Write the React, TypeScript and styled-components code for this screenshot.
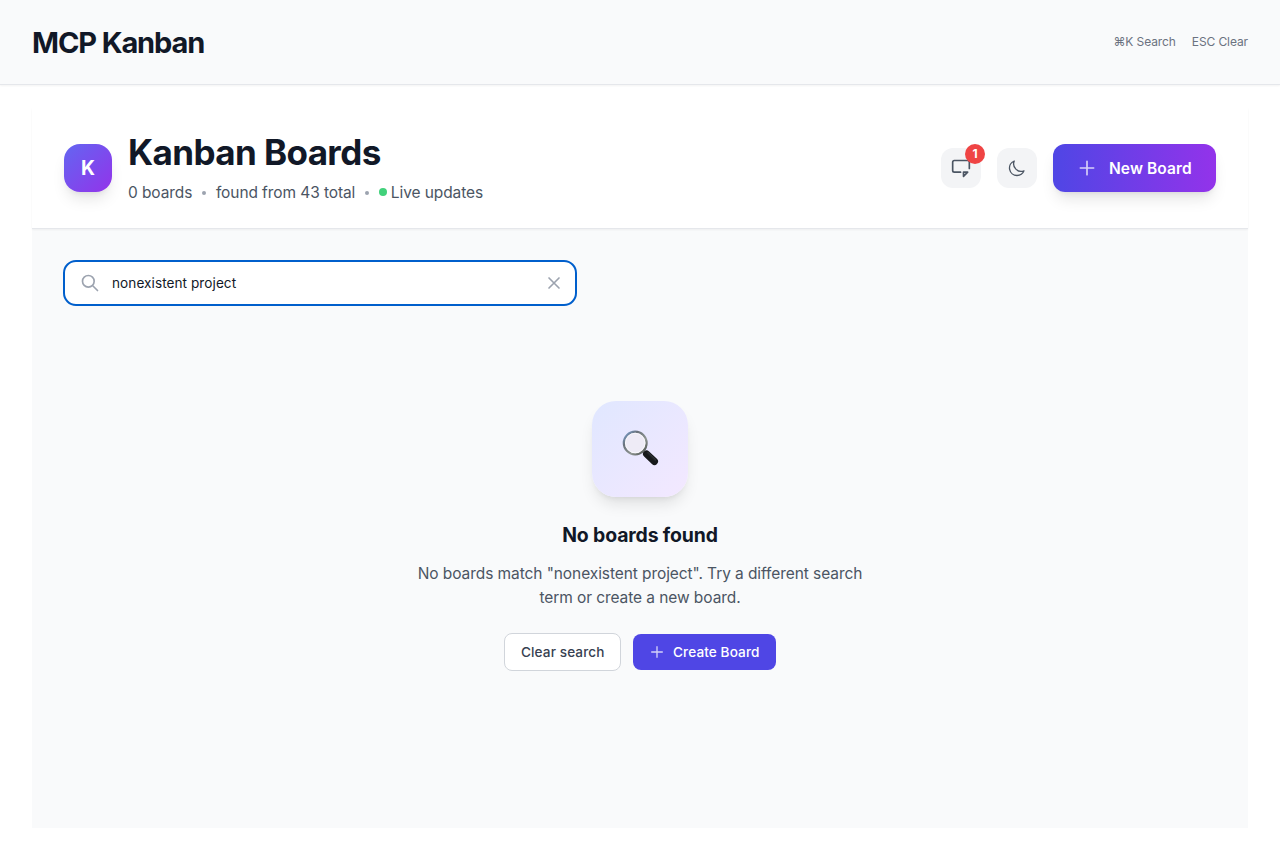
import React, { useState } from "react";
import styled, { createGlobalStyle, css } from "styled-components";

const GlobalStyle = createGlobalStyle`
  *, *::before, *::after { box-sizing: border-box; }
  body {
    margin: 0;
    background: #fff;
    color: #111827;
    font-family: Inter, "Liberation Sans", sans-serif;
    font-size: 15.5px;
    line-height: 24px;
  }
  h1, h2, h3, p { margin: 0; }
  button, input { font: inherit; }
`;

const Page = styled.div`
  min-height: 852px;
`;

const TopBar = styled.header`
  display: flex;
  align-items: center;
  justify-content: space-between;
  height: 85px;
  padding: 0 32px;
  background: #f9fafb;
  border-bottom: 1px solid #e5e7eb;
  box-shadow: 0 1px 2px rgba(0, 0, 0, 0.05);
`;

const AppName = styled.h1`
  padding-top: 2px;
  font-size: 29px;
  line-height: 36px;
  font-weight: 700;
  letter-spacing: -1.12px;
`;

const Hints = styled.div`
  display: flex;
  gap: 16px;
  font-size: 12px;
  line-height: 16px;
  letter-spacing: -0.1px;
  color: #6b7280;
`;

const Panel = styled.main`
  margin: 23px 32px 24px;
  height: 720px;
  background: #f9fafb;
`;

const PanelHeader = styled.div`
  display: flex;
  align-items: center;
  justify-content: space-between;
  height: 121px;
  padding: 0 32px;
  background: #fff;
  border-bottom: 1px solid #e5e7eb;
  box-shadow: 0 1px 2px rgba(0, 0, 0, 0.05);
`;

const Brand = styled.div`
  display: flex;
  align-items: center;
  gap: 16px;
`;

const Logo = styled.div`
  display: grid;
  place-items: center;
  width: 48px;
  height: 48px;
  border-radius: 16px;
  background: linear-gradient(to bottom right, #6366f1, #9333ea);
  box-shadow: 0 10px 15px -3px rgba(0, 0, 0, 0.1), 0 4px 6px -4px rgba(0, 0, 0, 0.1);
  color: #fff;
  font-size: 19.4px;
  font-weight: 700;
`;

const Title = styled.h2`
  font-size: 35px;
  line-height: 40px;
  font-weight: 700;
  letter-spacing: -0.6px;
`;

const Meta = styled.div`
  display: flex;
  align-items: center;
  margin-top: 8px;
  color: #4b5563;
  letter-spacing: -0.09px;
  line-height: 22px;
  height: 24px;
  white-space: nowrap;
`;

const MetaText = styled.span`
  padding-top: 2px;
`;

const Separator = styled.span`
  width: 4px;
  height: 4px;
  margin: 2px 9.8px 0;
  border-radius: 50%;
  background: #9ca3af;
`;

const LiveDot = styled.span`
  width: 8px;
  height: 8px;
  margin-right: 4px;
  border-radius: 50%;
  background: #41d17b;
`;

const Actions = styled.div`
  display: flex;
  align-items: center;
  gap: 16px;
`;

const IconButton = styled.button`
  position: relative;
  display: grid;
  place-items: center;
  width: 40px;
  height: 40px;
  padding: 0;
  border: 0;
  border-radius: 12px;
  background: #f3f4f6;
  color: #4b5563;
`;

const Badge = styled.span`
  position: absolute;
  top: -4px;
  right: -4px;
  width: 20px;
  height: 20px;
  border-radius: 50%;
  background: #ef4444;
  color: #fff;
  font-size: 12px;
  line-height: 20px;
  font-weight: 700;
  text-align: center;
`;

const Button = styled.button<{ $kind: "hero" | "solid" | "outline" }>`
  display: flex;
  align-items: center;
  border: 0;
  color: #fff;
  white-space: nowrap;
  svg { flex: none; opacity: 0.75; }
  ${({ $kind }) =>
    $kind === "hero"
      ? css`
          gap: 12px;
          width: 163px;
          height: 48px;
          padding: 0 24px;
          border-radius: 12px;
          background: linear-gradient(to right, #4f46e5, #9333ea);
          box-shadow: 0 10px 15px -3px rgba(0, 0, 0, 0.1), 0 4px 6px -4px rgba(0, 0, 0, 0.1);
          font-weight: 600;
          letter-spacing: 0.1px;
          span { padding-top: 2px; }
        `
      : css`
          gap: 8px;
          height: 36px;
          padding: 0 16px;
          border-radius: 8px;
          background: #4f46e5;
          font-size: 13.6px;
          line-height: 20px;
          font-weight: 500;
          letter-spacing: 0.1px;
        `}
  ${({ $kind }) => $kind === "solid" && css`width: 143px;`}
  ${({ $kind }) =>
    $kind === "outline" &&
    css`
      width: 117px;
      height: 38px;
      border: 1px solid #d1d5db;
      background: #fff;
      color: #374151;
    `}
`;

const SearchBox = styled.label`
  display: flex;
  align-items: center;
  width: 514px;
  height: 46px;
  margin: 31px 0 0 31px;
  padding: 0 11px 0 15px;
  border: 2px solid #005fcc;
  border-radius: 13px;
  background: #fff;
  color: #9ca3af;
`;

const SearchInput = styled.input`
  flex: 1;
  min-width: 0;
  margin-left: 12px;
  padding: 0;
  border: 0;
  outline: 0;
  background: transparent;
  color: #111827;
  font-size: 13.6px;
  line-height: 20px;
  letter-spacing: 0.06px;
`;

const ClearButton = styled.button`
  display: flex;
  padding: 0;
  border: 0;
  background: none;
  color: #9ca3af;
`;

const EmptyState = styled.section`
  display: flex;
  flex-direction: column;
  align-items: center;
  padding-top: 95px;
  text-align: center;
`;

const EmptyTile = styled.div`
  display: grid;
  place-items: center;
  width: 96px;
  height: 96px;
  border-radius: 24px;
  background: linear-gradient(to bottom right, #e0e7ff, #f3e8ff);
  box-shadow: 0 10px 15px -3px rgba(0, 0, 0, 0.1), 0 4px 6px -4px rgba(0, 0, 0, 0.1);
`;

const EmptyTitle = styled.h3`
  margin-top: 24px;
  font-size: 19.4px;
  line-height: 28px;
  font-weight: 700;
  letter-spacing: -0.13px;
`;

const EmptyText = styled.p`
  width: 450px;
  margin-top: 13px;
  color: #4b5563;
  letter-spacing: -0.08px;
`;

const ButtonRow = styled.div`
  display: flex;
  align-items: center;
  gap: 12px;
  margin-top: 23px;
`;

function Icon({ d, size = 20, width = 1.5 }: { d: string; size?: number; width?: number }) {
  return (
    <svg width={size} height={size} viewBox="0 0 24 24" fill="none" stroke="currentColor" strokeWidth={width} strokeLinecap="round" strokeLinejoin="round">
      <path d={d} />
    </svg>
  );
}

const PLUS = "M12 4v16m8-8H4";
const SEARCH = "M21 21l-6-6m2-5a7 7 0 11-14 0 7 7 0 0114 0z";
const CLOSE = "M6 18L18 6M6 6l12 12";
const MOON = "M20.354 15.354A9 9 0 018.646 3.646 9.003 9.003 0 0012 21a9.003 9.003 0 008.354-5.646z";
const NOTIFY = "M15 17h5l-5 5v-5zM11.5 17H4a2 2 0 01-2-2V5a2 2 0 012-2h16a2 2 0 012 2v7.5";

function Magnifier() {
  return (
    <svg width="40" height="40" viewBox="0 0 40 40">
      <defs>
        <linearGradient id="rim" x1="0" y1="0" x2="1" y2="1">
          <stop offset="0" stopColor="#7aa5d8" />
          <stop offset="0.3" stopColor="#69717a" />
          <stop offset="0.65" stopColor="#8f9692" />
          <stop offset="1" stopColor="#3f4442" />
        </linearGradient>
        <linearGradient id="grip" x1="0" y1="1" x2="1" y2="0">
          <stop offset="0" stopColor="#050607" />
          <stop offset="0.5" stopColor="#202326" />
          <stop offset="0.7" stopColor="#55595d" />
          <stop offset="1" stopColor="#111" />
        </linearGradient>
      </defs>
      <path d="M22.5 21.5l3 3" stroke="#858a8c" strokeWidth="3" />
      <path d="M26.6 25l7.8 7.4" stroke="#17191b" strokeWidth="7.2" strokeLinecap="round" />
      <path d="M27.6 24l7.4 7.2" stroke="url(#grip)" strokeWidth="2" strokeLinecap="round" />
      <circle cx="15.2" cy="14" r="11.4" fill="#eeebf6" stroke="url(#rim)" strokeWidth="2.2" />
      <circle cx="15.2" cy="14" r="9.8" fill="none" stroke="#fff" strokeWidth="0.8" opacity="0.8" />
    </svg>
  );
}

export default function App() {
  const [query, setQuery] = useState("nonexistent project");
  return (
    <Page>
      <GlobalStyle />
      <TopBar>
        <AppName>MCP Kanban</AppName>
        <Hints>
          <span>⌘K Search</span>
          <span>ESC Clear</span>
        </Hints>
      </TopBar>
      <Panel>
        <PanelHeader>
          <Brand>
            <Logo>K</Logo>
            <div>
              <Title>Kanban Boards</Title>
              <Meta>
                <MetaText>0 boards</MetaText>
                <Separator />
                <MetaText>found from 43 total</MetaText>
                <Separator />
                <LiveDot />
                <MetaText>Live updates</MetaText>
              </Meta>
            </div>
          </Brand>
          <Actions>
            <IconButton aria-label="Notifications">
              <Icon d={NOTIFY} width={2} />
              <Badge>1</Badge>
            </IconButton>
            <IconButton aria-label="Dark mode">
              <Icon d={MOON} width={1.6} />
            </IconButton>
            <Button $kind="hero">
              <Icon d={PLUS} width={2} />
              <span>New Board</span>
            </Button>
          </Actions>
        </PanelHeader>
        <SearchBox>
          <Icon d={SEARCH} width={2} />
          <SearchInput value={query} onChange={(e) => setQuery(e.target.value)} />
          <ClearButton aria-label="Clear" onClick={() => setQuery("")}>
            <Icon d={CLOSE} width={2} />
          </ClearButton>
        </SearchBox>
        <EmptyState>
          <EmptyTile>
            <Magnifier />
          </EmptyTile>
          <EmptyTitle>No boards found</EmptyTitle>
          <EmptyText>{`No boards match "${query}". Try a different search term or create a new board.`}</EmptyText>
          <ButtonRow>
            <Button $kind="outline" onClick={() => setQuery("")}>Clear search</Button>
            <Button $kind="solid">
              <Icon d={PLUS} size={16} width={2} />
              <span>Create Board</span>
            </Button>
          </ButtonRow>
        </EmptyState>
      </Panel>
    </Page>
  );
}
